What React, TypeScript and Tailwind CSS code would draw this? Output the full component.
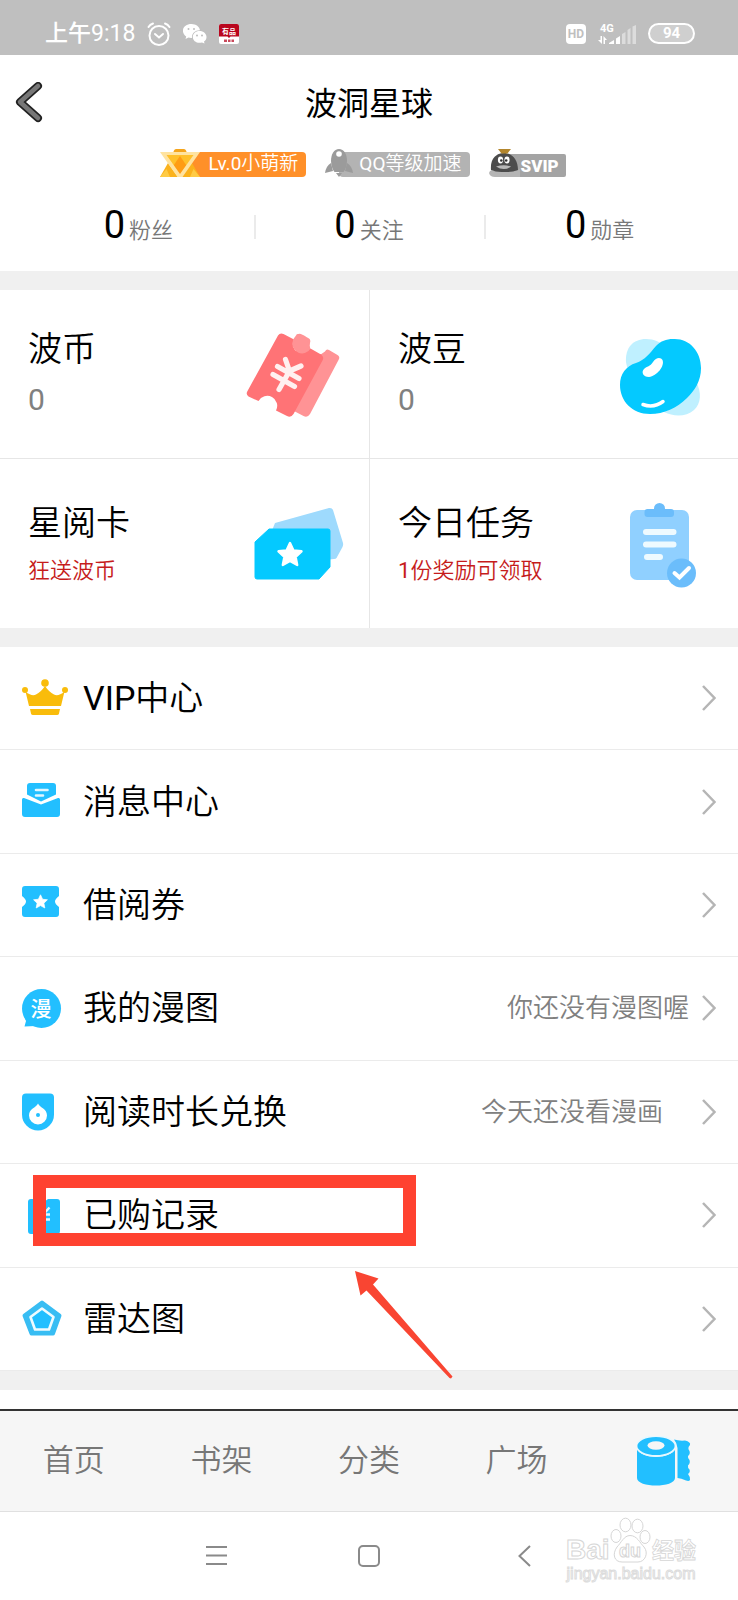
import type { ReactNode } from "react";
import clsx from "clsx";

interface AssetCard {
  title: string;
  note: string;
  promo?: boolean;
  icon: ReactNode;
}

interface MenuItem {
  label: string;
  hint?: string;
  hintInset?: boolean;
  marked?: boolean;
  icon: ReactNode;
}

const STAR = "M0 -10 L2.9 -3.8 L9.6 -3.1 L4.7 1.6 L6 8.3 L0 5 L-6 8.3 L-4.7 1.6 L-9.6 -3.1 L-2.9 -3.8 Z";

// Latin letters look too thin at the CJK weight, so they get the regular one
function MixedText({ text }: { text: string }) {
  const latin = text.match(/^[\w.]+/)?.[0] ?? "";
  return (
    <>
      {latin && <span className="font-normal">{latin}</span>}
      {text.slice(latin.length)}
    </>
  );
}

function CardIcon({ children }: { children: ReactNode }) {
  return (
    <svg className="h-24 w-24 shrink-0 overflow-visible" viewBox="0 0 96 96" fill="none" aria-hidden="true">
      {children}
    </svg>
  );
}

function RowIcon({ children }: { children: ReactNode }) {
  return (
    <svg className="h-[46px] w-[46px] shrink-0" viewBox="0 0 46 46" fill="#22bfff" aria-hidden="true">
      {children}
    </svg>
  );
}

const cards: AssetCard[] = [
  {
    title: "波币",
    note: "0",
    icon: (
      <CardIcon>
        <path
          d="M52 9 Q54 7 57 8.500 L64 12.500 Q66 14 65 17 A9 9 0 0 0 80 25.500 Q81.500 22.500 84 24 L92.500 29 Q95.500 31 93.500 34 L65 88 Q62.500 92 58.500 90 L47 84 Z"
          fill="#ff9395"
        />
        <path
          d="M33 9.500 Q35 6.500 38.500 8 L49 13.500 A9 9 0 0 0 65.500 22.500 L76 28.500 Q79.500 31 77.500 34.500 L48.500 88 Q46 92 42 90 L31 84.500 A9.500 9.500 0 0 0 13.500 75 L3.500 70.500 Q.500 68.500 2.500 65 Z"
          fill="#ff7376"
        />
        <path d="M48.500 13 A8.500 8.500 0 0 0 65 22 L60 10 L52 8 Z" fill="#ff9395" />
        <path
          d="M40.500 33.500 L44.500 45 M56 40 L44.500 45 L34 63.500 M32.500 40.500 L54 52.500 M28 48.500 L49.500 60.500"
          stroke="#fff0f0"
          strokeWidth="5.200"
          strokeLinecap="round"
          strokeLinejoin="round"
        />
      </CardIcon>
    ),
  },
  {
    title: "波豆",
    note: "0",
    icon: (
      <CardIcon>
        <path d="M12 36 C11 22 19 13 32 13 C40 13 47 16 52 22 L36 50 L14 46 Z" fill="#bff0ff" />
        <path d="M48 80 L82 56 C88 66 87 78 80 84 C72 91 60 91 50 86 Z" fill="#bff0ff" />
        <path
          d="M59 13 C75 12 87 25 87 42 C87 55 81 64 73 72 C63 82 50 88 36 88 C18 88 6 75 6 59 C6 48 12 40 22 37 C31 34 36 27 42 20 C47 15 52 13 59 13 Z"
          fill="#04c9ff"
        />
        <path d="M48.500 34 C51 40 43 50 35 51 C29 51 27 46 30 43 C33 40 36 41 39 36 C42 31 47 31 48.500 34 Z" fill="#fff" />
        <path d="M29 78.500 C36 81 43 80 49 75.500" stroke="#fff" strokeWidth="3.500" strokeLinecap="round" />
      </CardIcon>
    ),
  },
  {
    title: "星阅卡",
    note: "狂送波币",
    promo: true,
    icon: (
      <CardIcon>
        <path d="M30 26 L84 11 Q87 10.500 88 13 L98 46 Q98.500 48 97.500 50 L91.500 61 Q91 62 89 62 L80 63 L26 36 Z" fill="#9edafd" />
        <path
          d="M24 32 H83 Q85 32 85 34 V70 L74 82 H12 Q10 82 10 80 V45 Z"
          fill="#04c9ff"
          stroke="#04c9ff"
          strokeLinejoin="round"
        />
        <path d={STAR} transform="translate(45 58) scale(1.200)" fill="#fff" stroke="#fff" strokeWidth="2" strokeLinejoin="round" />
      </CardIcon>
    ),
  },
  {
    title: "今日任务",
    note: "1份奖励可领取",
    promo: true,
    icon: (
      <CardIcon>
        <rect x="16" y="13" width="59" height="70" rx="7" fill="#90d0ff" />
        <circle cx="45.500" cy="11.500" r="5.500" fill="#6bbdfb" />
        <rect x="30.500" y="12" width="29.500" height="8" rx="3" fill="#6bbdfb" />
        <path d="M32 35 H59.500 M32 47.500 H59.500 M33 60 H46" stroke="#eefaff" strokeWidth="6" strokeLinecap="round" />
        <circle cx="67.500" cy="76" r="14.500" fill="#6bbdfb" />
        <path d="M60.500 76 L65.500 80.500 L75 71" stroke="#fff" strokeWidth="4" strokeLinecap="round" />
      </CardIcon>
    ),
  },
];

const menu: MenuItem[] = [
  {
    label: "VIP中心",
    icon: (
      <RowIcon>
        <g fill="#f9bc0b">
          <circle cx="3" cy="15" r="3" />
          <circle cx="23" cy="8" r="3.800" />
          <circle cx="43" cy="15" r="3" />
          <path d="M3.500 16.500 Q10 22 14 19.500 Q19 17 23 11 Q27 17 32 19.500 Q36 22 42.500 16.500 L39 31 H7 Z" />
          <path d="M8 34 H38 L37 38.500 Q36.600 40 35 40 H11 Q9.400 40 9 38.500 Z" />
        </g>
      </RowIcon>
    ),
  },
  {
    label: "消息中心",
    icon: (
      <RowIcon>
        <path d="M8 4 H31 Q34 4 34 7 V15.500 L19 22.500 L5 15.500 V7 Q5 4 8 4 Z" />
        <path d="M14 11 H25.500 M14 16.500 H21" stroke="#dff6ff" strokeWidth="2.600" strokeLinecap="round" />
        <path d="M0 20.500 Q0 18.500 2 19 L19 25.500 L36 19 Q38 18.500 38 20.500 V35 Q38 38 35 38 H3 Q0 38 0 35 Z" />
      </RowIcon>
    ),
  },
  {
    label: "借阅券",
    icon: (
      <RowIcon>
        <path d="M3 4 H34 Q37 4 37 7 V14 Q33 17 33 19.500 Q33 22 37 25 V32 Q37 35 34 35 H3 Q0 35 0 32 V25 Q4 22 4 19.500 Q4 17 0 14 V7 Q0 4 3 4 Z" />
        <path d={STAR} transform="translate(18.500 20) scale(.720)" fill="#fff" stroke="#fff" strokeLinejoin="round" />
      </RowIcon>
    ),
  },
  {
    label: "我的漫图",
    hint: "你还没有漫图喔",
    icon: (
      <RowIcon>
        <circle cx="19.500" cy="23.500" r="19.500" />
        <path d="M2 31 L4 36 L2.500 41.500 L13 41 Z" />
        <text x="19" y="31" textAnchor="middle" fontSize="21" fontWeight="500" fill="#fff">
          漫
        </text>
      </RowIcon>
    ),
  },
  {
    label: "阅读时长兑换",
    hint: "今天还没看漫画",
    hintInset: true,
    icon: (
      <RowIcon>
        <path d="M4 4.500 H28 Q32 4.500 32 8.500 V25.500 A16 16 0 0 1 0 25.500 V8.500 Q0 4.500 4 4.500 Z" />
        <path d="M16 14.500 C18 19 25 19.500 25 26.500 A9 9 0 0 1 7 26.500 C7 19.500 14 19 16 14.500 Z" fill="#fff" />
        <circle cx="16" cy="26" r="2" />
      </RowIcon>
    ),
  },
  {
    label: "已购记录",
    marked: true,
    icon: (
      <RowIcon>
        <path d="M9 7 H18 Q22 11 26 7 H35 Q38 7 38 10 V39 Q38 42 35 42 H9 Q6 42 6 39 V10 Q6 7 9 7 Z" />
        <path
          d="M16.500 15.500 L22 21.500 L27.500 15.500 M22 21.500 V33 M16 22.500 H28 M16 27.500 H28"
          fill="none"
          stroke="#e6f8ff"
          strokeWidth="2.400"
        />
      </RowIcon>
    ),
  },
  {
    label: "雷达图",
    icon: (
      <RowIcon>
        <path
          d="M20 6.500 L37.500 19.500 L31 37.500 H9.500 L2.500 19.500 Z"
          fill="#38bdf3"
          stroke="#38bdf3"
          strokeWidth="4"
          strokeLinejoin="round"
        />
        <path d="M20 12.500 L31.500 21 L27 33.500 H13 L8.500 21 Z" fill="#22bfff" stroke="#effbff" strokeWidth="2.600" strokeLinejoin="round" />
      </RowIcon>
    ),
  },
];

const stats = [
  { value: 0, label: "粉丝" },
  { value: 0, label: "关注" },
  { value: 0, label: "勋章" },
];

const tabs = ["首页", "书架", "分类", "广场"];

function StatusBar() {
  return (
    <div className="flex h-[55px] items-center justify-between bg-[#bfbfbf] pr-[43px] pl-[45px] pt-3 text-white">
      <div className="flex items-center gap-3">
        <span className="text-[23px] leading-6">
          <span className="font-medium">上午</span>9:18
        </span>
        <svg className="h-6 w-6" viewBox="0 0 24 24" fill="none" stroke="#fff" strokeWidth="2" strokeLinecap="round" aria-hidden="true">
          <circle cx="12" cy="13.500" r="9.500" />
          <path d="M1.500 5 Q3 2.500 6 1.500 M22.500 5 Q21 2.500 18 1.500 M8 12 L12 15.500 L16 12" />
        </svg>
        <svg className="h-5 w-6" viewBox="0 0 24 20" fill="#fff" aria-hidden="true">
          <path d="M8.500 0 C13 0 16.500 2.800 17 6.200 C12 6 8.500 9.500 9 14 Q7 14.200 5.500 13.600 L2.500 15 L3.200 12.500 C-3 8 0 0 8.500 0 Z" />
          <path d="M16.500 7 C20.500 7 23.500 9.700 23.500 13 C23.500 15 22.500 16.500 21 17.600 L21.500 19.500 L19 18.500 C14 19.800 9.800 17 9.800 13 C9.800 9.700 12.500 7 16.500 7 Z" />
          <g fill="#bfbfbf">
            <circle cx="5.500" cy="5" r="1" />
            <circle cx="11" cy="5" r="1" />
            <circle cx="14" cy="11.500" r="1" />
            <circle cx="19" cy="11.500" r="1" />
          </g>
        </svg>
        <svg className="h-5 w-5" viewBox="0 0 20 20" aria-hidden="true">
          <rect width="20" height="20" rx="2" fill="#fff" />
          <path d="M2 0 H18 Q20 0 20 2 V12.500 H11.500 L10 14 L8.500 12.500 H0 V2 Q0 0 2 0 Z" fill="#b9061e" />
          <text x="10" y="10" textAnchor="middle" fontSize="7" fontWeight="700" fill="#fff">
            有品
          </text>
          <path d="M5 15.500 H8 V18 H5 Z M9 15.500 H11.500 V18 H9 Z M12.500 15.500 H15 V18 H12.500 Z" fill="#c8485a" />
        </svg>
      </div>
      <div className="flex items-center gap-3">
        <span className="h-5 w-5 rounded-sm bg-white text-center text-[12px] leading-5 font-bold text-[#bfbfbf]">HD</span>
        <svg className="h-[22px] w-[38px]" viewBox="0 0 38 22" fill="#fff" aria-hidden="true">
          <text x="2" y="9" fontSize="11" fontWeight="700">
            4G
          </text>
          <path d="M2.500 13 H4 V21 L0 17 H2.500 Z M5.500 21 V13 L9 17 H7 V21 Z" />
          <path d="M11 21 V20 L16 17 V21 Z M18 21 V15.500 L22 13 V21 Z" />
          <path d="M24 21 V11 L27.500 9 V21 Z M29.500 21 V7 L32.500 5 V21 Z M34.500 21 V3.500 L38 2 V21 Z" fillOpacity=".45" />
        </svg>
        <span className="h-[21px] w-[47px] rounded-full border-2 border-white bg-white/25 text-center text-[15px] leading-[17px] font-bold">
          94
        </span>
      </div>
    </div>
  );
}

function ProfileHeader() {
  return (
    <header>
      <div className="relative flex h-[94px] items-center justify-center pt-1">
        <button type="button" aria-label="返回" className="absolute left-3.5">
          <svg className="h-11 w-8" viewBox="0 0 32 44" fill="none" strokeLinecap="round" strokeLinejoin="round">
            <path d="M24 4 L6 20 L24 36" stroke="#222" strokeWidth="8" />
            <path d="M24 4 L6 20 L24 36" stroke="#777" strokeWidth="4.500" />
          </svg>
        </button>
        <h1 className="text-[32px] leading-10">波洞星球</h1>
      </div>

      <div className="flex h-7 items-end justify-center gap-[19px] pr-3 text-[19px] font-[350] text-white">
        <div className="flex items-end">
          <svg className="z-10 -mr-5 h-7 w-10 shrink-0" viewBox="0 0 40 28" aria-hidden="true">
            <path d="M14 1.500 Q14.500 0 16 0 H24 Q25.500 0 26 1.500 L27 4 H13 Z" fill="#f5a51c" />
            <path d="M8 14 L0 28 H18 Z M32 14 L40 28 H22 Z" fill="#fbb21c" />
            <path d="M6.500 20 L10 28 H0 Z M33.500 20 L40 28 H30 Z" fill="#ffcb45" />
            <path d="M5 5 H35 L20 26 Z" fill="#ffc02b" />
            <path d="M20 7 L27.500 18 L20 26 L12.500 18 Z" fill="#ff9c14" />
            <path d="M0 3 H40 L22.500 28 H17.500 Z M6.500 6 L20 25 L33.500 6 Z" fill="#ffe3a0" fillRule="evenodd" />
          </svg>
          <span className="h-[25px] rounded-[4px] bg-[#ff9029] pr-2 pl-7 leading-[23px]">
            <MixedText text="Lv.0小萌新" />
          </span>
        </div>
        <div className="flex items-end">
          <svg className="z-10 -mr-[14px] h-7 w-7 shrink-0" viewBox="0 0 28 28" fill="#9b9b9b" aria-hidden="true">
            <path d="M14 0 C19 0 22 5 22 12 C22 17 20 21 18.500 23 H9.500 C8 21 6 17 6 12 C6 5 9 0 14 0 Z" />
            <path d="M6 14 Q1 17 0 24 L8 22 Z M22 14 Q27 17 28 24 L20 22 Z" />
            <path d="M11 24 H17 L14 28 Z" />
            <circle cx="14" cy="5" r="2.800" fill="#fff" />
          </svg>
          <span className="h-[25px] rounded-[4px] bg-[#b3b3b3] pr-2 pl-5 leading-[23px]">
            <MixedText text="QQ等级加速" />
          </span>
        </div>
        <div className="flex items-end">
          <svg className="z-10 -mr-6 h-7 w-8 shrink-0" viewBox="0 0 32 28" aria-hidden="true">
            <path d="M0 24 Q1 20 5 22 H27 L31 20 V28 H6 Q1 28 0 24 Z" fill="#b5b5b5" />
            <path d="M2 21 C1 10 7 4 15 4 C23 4 29 11 29 21 Q22 23.500 15 23 Q7 23.500 2 21 Z" fill="#4c4c4c" />
            <path d="M9 0 H22 L18.500 4.500 H12.500 Z" fill="#b3862d" />
            <ellipse cx="11.500" cy="11" rx="2.600" ry="3.400" fill="#fff" />
            <ellipse cx="18" cy="11" rx="2.600" ry="3.400" fill="#fff" />
            <circle cx="12.300" cy="11.500" r="1.300" fill="#333" />
            <circle cx="17.200" cy="11.500" r="1.300" fill="#333" />
            <path d="M7 17.500 Q15 15 22 17.500 Q15 22.500 7 17.500 Z" fill="#b9b9b9" />
          </svg>
          <span className="h-[23px] rounded-xs bg-[#a4a4a4] pr-[7px] pl-6 text-[17px] leading-6 font-black">SVIP</span>
        </div>
      </div>

      <dl className="flex h-[94px] items-center px-[23px] pt-2">
        {stats.map((stat, i) => (
          <div key={stat.label} className="relative flex flex-1 items-baseline justify-center gap-1">
            {i > 0 && <span className="absolute top-2.5 left-0 h-6 w-0.5 bg-[#ebebeb]" />}
            <dt className="order-2 text-[22px] leading-10 font-[350] text-[#777]">{stat.label}</dt>
            <dd className="text-[38px] leading-10">{stat.value}</dd>
          </div>
        ))}
      </dl>
    </header>
  );
}

function AssetGrid() {
  return (
    <section className="grid grid-cols-2 border-y-[19px] border-[#f0f0f0]">
      {cards.map((card, i) => (
        <a
          key={card.title}
          href="#"
          className={clsx(
            "flex h-[169px] items-center justify-between border-[#e6e6e6] pr-7 pl-7",
            i % 2 === 1 && "border-l",
            card.promo ? "pt-0.5" : "border-b"
          )}
        >
          <div className="pt-1">
            <div className="text-[34px] leading-12 font-[350]">{card.title}</div>
            <div
              className={clsx(
                card.promo ? "text-[22px] leading-12 font-[350] text-[#c61c1c]" : "text-[30px] leading-[54px] text-[#808080]"
              )}
            >
              <MixedText text={card.note} />
            </div>
          </div>
          {card.icon}
        </a>
      ))}
    </section>
  );
}

function MenuList() {
  return (
    <ul className="flex grow flex-col">
      {menu.map((item) => (
        <li key={item.label} className="relative flex min-h-[100px] flex-1 border-b border-[#ebebeb]">
          <a href="#" className="flex grow items-center gap-[15px] px-[22px]">
            {item.icon}
            <span className="grow text-[34px] leading-12 font-[350]">
              <MixedText text={item.label} />
            </span>
            {item.hint && (
              <span className={clsx("text-[26px] leading-10 font-[350] text-[#808080]", item.hintInset && "pr-[26px]")}>
                {item.hint}
              </span>
            )}
            <svg className="-ml-0.5 h-[26px] w-[14px]" viewBox="0 0 14 26" fill="none" stroke="#b5b5b5" strokeWidth="2.500" aria-hidden="true">
              <path d="M1 1 L12.500 13 L1 25" />
            </svg>
          </a>
          {item.marked && (
            <>
              <div className="pointer-events-none absolute top-[11px] left-[33px] h-[71px] w-[383px] border-[13px] border-[#ff4230]" />
              <svg
                className="pointer-events-none absolute top-[107px] left-[355px] z-10 h-[108px] w-[98px]"
                viewBox="0 0 98 108"
                fill="#f94532"
                aria-hidden="true"
              >
                <path d="M0 0 L23.500 7.500 L18 13.500 L97.500 105.500 L96 107.500 L94.500 107 L11.500 19.500 L5.500 24.500 Z" />
              </svg>
            </>
          )}
        </li>
      ))}
    </ul>
  );
}

function TabBar() {
  return (
    <nav className="flex h-[103px] border-t-2 border-b border-t-[#333] border-b-[#e0e0e0] bg-[#f6f6f6]">
      {tabs.map((tab) => (
        <button key={tab} type="button" className="flex-1 text-[31px] leading-10 font-[350] text-[#777]">
          {tab}
        </button>
      ))}
      <button type="button" aria-label="我的" className="flex flex-1 items-center justify-center">
        <svg className="h-[50px] w-[54px]" viewBox="0 0 54 50" fill="#22bfff">
          <path d="M0 12 C3 24 35 24 38 12 V42 C38 52 0 52 0 42 Z" />
          <path d="M37 3.500 Q42 5 48 4.500 Q54 6 53 9 Q50 12 52.500 15 Q53.500 18 51 20 Q50.500 22 52.500 24 Q53.500 27 51 29.500 Q50.500 32 52.500 33.500 Q53.500 36 51 38 Q53.500 41 53 44 Q52 45.500 49 44.500 Q44 42 40.500 42 V12 Q40 7 37 3.500 Z" />
          <ellipse cx="19" cy="10" rx="19.500" ry="10" stroke="#e6f8ff" strokeWidth="1.800" />
          <ellipse cx="19" cy="9.500" rx="8.500" ry="4.200" fill="#f6f6f6" />
        </svg>
      </button>
    </nav>
  );
}

function SystemNav() {
  return (
    <div className="relative flex h-[88px] items-center justify-center gap-[130px]">
      <button type="button" aria-label="菜单">
        <svg className="h-[22px] w-[22px]" viewBox="0 0 22 22" stroke="#8a8a8a" strokeWidth="2">
          <path d="M0 2 H21 M0 10.500 H21 M0 19 H21" />
        </svg>
      </button>
      <button type="button" aria-label="主屏幕">
        <svg className="h-[22px] w-[22px]" viewBox="0 0 22 22" fill="none" stroke="#8a8a8a" strokeWidth="2">
          <rect x="1" y="1" width="20" height="20" rx="4" />
        </svg>
      </button>
      <button type="button" aria-label="后退">
        <svg className="h-[22px] w-[22px]" viewBox="0 0 22 22" fill="none" stroke="#8a8a8a" strokeWidth="2">
          <path d="M20 1 L9.500 11 L20 21" />
        </svg>
      </button>
      <div className="absolute right-[38px] bottom-4 flex w-[138px] flex-col text-white">
        <svg className="h-12 w-[138px]" viewBox="0 0 138 48" fill="#fff" stroke="#d6d6d6" fontFamily="'Liberation Sans', 'Noto Sans CJK SC', sans-serif">
          <text x="4" y="43" fontSize="28" fontWeight="700">
            Bai
          </text>
          <ellipse cx="54" cy="20" rx="5" ry="6.500" />
          <ellipse cx="63.500" cy="9" rx="5.500" ry="6.800" />
          <ellipse cx="75.500" cy="10" rx="5.500" ry="6.800" />
          <ellipse cx="83" cy="21" rx="5" ry="6.500" />
          <path d="M68 19.500 C75 19.500 78 27 82 31 C87 37 83 46 76 46 H60 C52 46 50 38 55 31 C59 27 62 19.500 68 19.500 Z" />
          <text x="57" y="41" fontSize="18" fontWeight="700">
            du
          </text>
          <text x="90" y="42" fontSize="22" fontWeight="700" strokeWidth=".800">
            经验
          </text>
        </svg>
        <span className="text-center font-['Liberation_Sans',sans-serif] text-[16px] leading-5 [-webkit-text-stroke:1px_#dcdcdc]">
          jingyan.baidu.com
        </span>
      </div>
    </div>
  );
}

export default function App() {
  return (
    <div className="flex min-h-screen flex-col bg-white font-[Roboto,'Noto_Sans_CJK_SC',sans-serif] text-black">
      <StatusBar />
      <ProfileHeader />
      <AssetGrid />
      <MenuList />
      <div className="mb-[19px] h-[19px] bg-[#f0f0f0]" />
      <TabBar />
      <SystemNav />
    </div>
  );
}
